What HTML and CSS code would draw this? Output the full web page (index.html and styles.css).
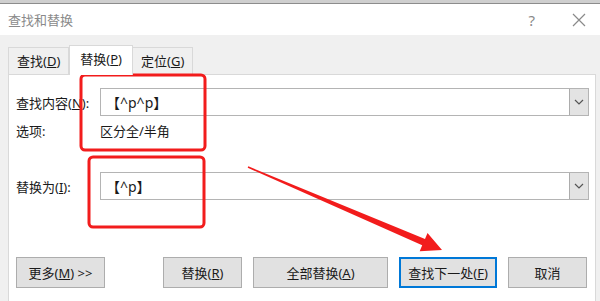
FILE: index.html
```html
<!DOCTYPE html>
<html lang="zh-CN">
<head>
    <meta charset="UTF-8" />
    <title>查找和替换</title>
    <link rel="stylesheet" href="styles.css">
</head>
<body>

    <div class="topband"></div>

    <div class="titlebar">
        <span class="title">查找和替换</span>
        <span class="help">?</span>
        <span class="close">
            <svg width="14" height="14" viewBox="0 0 14 14"><path d="M1 1 L13 13 M13 1 L1 13" stroke="#8a8a8a" stroke-width="1.2" fill="none"/></svg>
        </span>
    </div>

    <div class="dialog">
        <div class="tabs">
            <div class="tab">查找(<u>D</u>)</div>
            <div class="tab active">替换(<u>P</u>)</div>
            <div class="tab">定位(<u>G</u>)</div>
        </div>

        <div class="panel">
            <div class="row">
                <span class="label">查找内容(<u>N</u>):</span>
                <div class="combo">
                    <span class="value">【^p^p】</span>
                    <span class="drop"><svg width="10" height="6" viewBox="0 0 10 6"><path d="M1 1 L5 5 L9 1" stroke="#555" stroke-width="1.2" fill="none"/></svg></span>
                </div>
            </div>

            <div class="row options">
                <span class="label">选项:</span>
                <span>区分全/半角</span>
            </div>

            <div class="row replace-row">
                <span class="label">替换为(<u>I</u>):</span>
                <div class="combo">
                    <span class="value">【^p】</span>
                    <span class="drop"><svg width="10" height="6" viewBox="0 0 10 6"><path d="M1 1 L5 5 L9 1" stroke="#555" stroke-width="1.2" fill="none"/></svg></span>
                </div>
            </div>

            <div class="buttons">
                <button class="btn more">更多(<u>M</u>) &gt;&gt;</button>
                <button class="btn replace">替换(<u>R</u>)</button>
                <button class="btn replace-all">全部替换(<u>A</u>)</button>
                <button class="btn default">查找下一处(<u>F</u>)</button>
                <button class="btn cancel">取消</button>
            </div>
        </div>
    </div>

    <!-- marcas rojas encima de la captura -->
    <svg class="marks" width="600" height="301" viewBox="0 0 600 301">
        <rect x="81" y="75" width="124" height="75" rx="4" fill="none" stroke="#f21c1c" stroke-width="3"/>
        <rect x="89" y="157" width="115" height="70" rx="4" fill="none" stroke="#f21c1c" stroke-width="3"/>
        <polygon points="248.3,166.3 247.7,167.7 422.2,245.3 419.7,251.3 442,250 427.5,232.9 425,238.9" fill="#f21c1c"/>
    </svg>

</body>
</html>
```

FILE: styles.css
```css
body {
    margin: 0;
    width: 600px;
    height: 301px;
    overflow: hidden;
    position: relative;
    background-color: #f0f0f0;
    font-family: "Noto Sans", "Noto Sans CJK SC", sans-serif;
    font-size: 13px;
    color: #1a1a1a;
}

.topband {
    height: 3px;
    background-color: #cfcfcf;
    border-bottom: 1px solid #8c8c8c;
}

.titlebar {
    height: 31px;
    background-color: white;
    display: flex;
    align-items: center;
    padding: 0 8px;
}

.title {
    color: #8a8a8a;
    flex: 1;
}

.help {
    color: #8a8a8a;
    font-size: 15px;
    margin-right: 37px;
}

.close {
    display: flex;
    margin-right: 6px;
}

.dialog {
    padding: 10px 4px 0 8px;
}

.tabs {
    display: flex;
    align-items: flex-end;
    height: 29px;
}

.tab {
    height: 26px;
    line-height: 26px;
    padding: 0 8px;
    border: 1px solid #d9d9d9;
    border-bottom: none;
    background-color: #f0f0f0;
}

.tab + .tab {
    border-left: none;
}

.tab.active {
    height: 29px;
    line-height: 27px;
    background-color: white;
    border-left: 1px solid #d9d9d9;
    margin-bottom: -1px;
    position: relative;
    z-index: 1;
    padding: 0 10px;
}

.panel {
    background-color: white;
    border: 1px solid #d9d9d9;
    border-bottom: none;
    padding: 13px 6px 0 7px;
    height: 213px;
}

.row {
    display: flex;
    align-items: center;
}

.label {
    width: 84px;
    flex-shrink: 0;
}

.combo {
    flex: 1;
    height: 26px;
    border: 1px solid #b4b4b4;
    display: flex;
    align-items: center;
}

.value {
    flex: 1;
    padding-left: 5px;
    font-size: 14px;
}

.drop {
    width: 18px;
    height: 26px;
    background-color: #e3e3e3;
    border-left: 1px solid #acacac;
    display: flex;
    align-items: center;
    justify-content: center;
}

.options {
    height: 20px;
    margin-top: 4px;
}

.replace-row {
    margin-top: 32px;
}

.buttons {
    display: flex;
    gap: 11px;
    margin-top: 57px;
}

.btn {
    height: 31px;
    background-color: #e1e1e1;
    border: 1px solid #adadad;
    font-family: inherit;
    font-size: 13px;
    color: #1a1a1a;
    padding: 0;
}

.more {
    width: 89px;
}

.replace {
    width: 79px;
    margin-left: 47px;
}

.replace-all {
    width: 135px;
}

.default {
    width: 98px;
    border: 2px solid #0078d7;
}

.cancel {
    width: 79px;
}

.marks {
    position: absolute;
    top: 0;
    left: 0;
    pointer-events: none;
}
```
